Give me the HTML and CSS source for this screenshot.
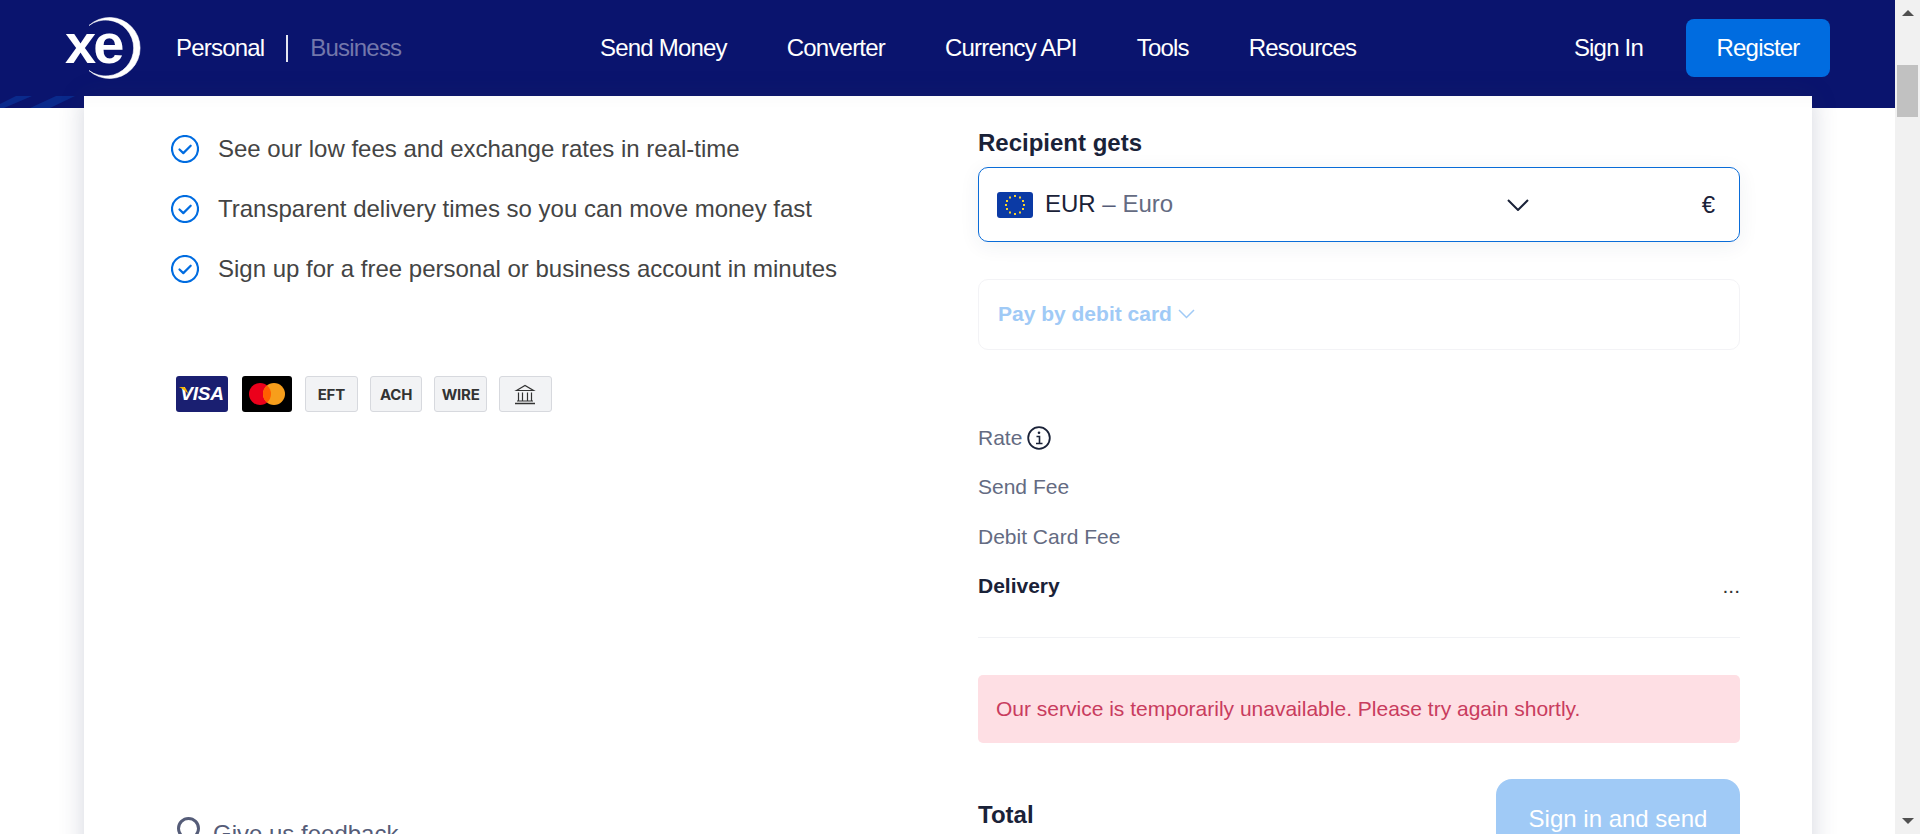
FILE: index.html
```html
<!DOCTYPE html>
<html lang="en">
<head>
<meta charset="utf-8">
<title>Xe Send Money</title>
<link rel="stylesheet" href="styles.css">
</head>
<body>
<div class="window">
  <div class="viewport">
    <div class="band">
      <header class="topbar">
        <a class="logo" aria-label="Xe">
          <svg width="78" height="62" viewBox="0 0 78 62">
            <path d="M24 8.500A30.500 30.500 0 1 1 24 53.500A28 28 0 1 0 24 8.500z" fill="#fff" stroke="#fff" stroke-width=".6"/>
            <text x="0" y="46" class="logo-text">xe</text>
          </svg>
        </a>
        <nav class="segment">
          <span class="seg-on">Personal</span>
          <span class="seg-line"></span>
          <span class="seg-off">Business</span>
        </nav>
        <nav class="mainnav">
          <span>Send Money</span>
          <span>Converter</span>
          <span>Currency API</span>
          <span>Tools</span>
          <span>Resources</span>
        </nav>
        <div class="auth">
          <span>Sign In</span>
          <span class="register">Register</span>
        </div>
      </header>
      <svg class="stripes" width="84" height="12" viewBox="0 0 84 12"><path d="M0 8L16 0h16L4 12H0zM30 12L56 0h19L50 12z" fill="#0a2a8c"/></svg>
    </div>
    <main class="card">
      <section class="left">
        <ul class="benefits">
          <li><svg class="tick" viewBox="0 0 28 28"><circle cx="14" cy="14" r="13" fill="none" stroke="#006ce0" stroke-width="2.200"/><path d="M8.500 14.500l3.800 3.600 7.400-7.400" fill="none" stroke="#006ce0" stroke-width="2.200" stroke-linecap="round" stroke-linejoin="round"/></svg>See our low fees and exchange rates in real-time</li>
          <li><svg class="tick" viewBox="0 0 28 28"><circle cx="14" cy="14" r="13" fill="none" stroke="#006ce0" stroke-width="2.200"/><path d="M8.500 14.500l3.800 3.600 7.400-7.400" fill="none" stroke="#006ce0" stroke-width="2.200" stroke-linecap="round" stroke-linejoin="round"/></svg>Transparent delivery times so you can move money fast</li>
          <li><svg class="tick" viewBox="0 0 28 28"><circle cx="14" cy="14" r="13" fill="none" stroke="#006ce0" stroke-width="2.200"/><path d="M8.500 14.500l3.800 3.600 7.400-7.400" fill="none" stroke="#006ce0" stroke-width="2.200" stroke-linecap="round" stroke-linejoin="round"/></svg>Sign up for a free personal or business account in minutes</li>
        </ul>
        <div class="badges">
          <span class="badge visa"><svg class="visa-swoosh" width="9" height="7" viewBox="0 0 9 7"><path d="M0 0h5c2 1 3 3 4 7C7 4 4 2 0 0z" fill="#f7b600"/></svg>VISA</span>
          <span class="badge mc"><svg width="36" height="22" viewBox="0 0 36 22"><circle cx="11" cy="11" r="11" fill="#eb001b"/><circle cx="25" cy="11" r="11" fill="#f79e1b"/><path d="M18 2.500A11 11 0 0 1 18 19.500A11 11 0 0 1 18 2.500z" fill="#ff5f00"/></svg></span>
          <span class="badge plain">EFT</span>
          <span class="badge plain">ACH</span>
          <span class="badge plain">WIRE</span>
          <span class="badge plain"><svg width="22" height="22" viewBox="0 0 22 22" fill="none" stroke="#333" stroke-width="1.200"><path d="M2.500 7.500L11 2.500l8.500 5z"/><path d="M4 7.500h14M4.500 9.500v8M8.500 9.500v8M13.500 9.500v8M17.500 9.500v8M3 18h16"/><path d="M1 20.500h20" stroke-width="1.500"/></svg></span>
        </div>
        <div class="feedback"><span class="feedback-ring"></span>Give us feedback</div>
      </section>
      <section class="right">
        <h2 class="label">Recipient gets</h2>
        <div class="select">
          <svg class="flag" width="36" height="26" viewBox="0 0 36 26">
            <rect width="36" height="26" rx="3" fill="#0b3aa5"/>
            <g fill="#f5cf2e">
              <rect x="17" y="3" width="2" height="2"/><rect x="22" y="4.500" width="2" height="2"/><rect x="25" y="8" width="2" height="2"/><rect x="26" y="12" width="2" height="2"/><rect x="25" y="16" width="2" height="2"/><rect x="22" y="19.500" width="2" height="2"/><rect x="17" y="21" width="2" height="2"/><rect x="12" y="19.500" width="2" height="2"/><rect x="9" y="16" width="2" height="2"/><rect x="8" y="12" width="2" height="2"/><rect x="9" y="8" width="2" height="2"/><rect x="12" y="4.500" width="2" height="2"/>
            </g>
          </svg>
          <span class="code">EUR <span class="dash">–</span> <span class="cname">Euro</span></span>
          <svg class="chev" width="22" height="12" viewBox="0 0 22 12"><path d="M1 1l10 10L21 1" fill="none" stroke="#1a2238" stroke-width="2"/></svg>
          <span class="sym">€</span>
        </div>
        <div class="pay">Pay by debit card <svg width="17" height="10" viewBox="0 0 17 10"><path d="M1 1l7.500 7.500L16 1" fill="none" stroke="#a0caf6" stroke-width="1.500"/></svg></div>
        <dl class="rows">
          <div class="row"><dt>Rate <svg class="info" width="24" height="24" viewBox="0 0 24 24"><circle cx="12" cy="12" r="10.800" fill="none" stroke="#1a2238" stroke-width="1.800"/><path d="M9.500 10.500h3v7M9 17.500h6.500" fill="none" stroke="#1a2238" stroke-width="1.600"/><circle cx="12" cy="6.800" r="1.300" fill="#1a2238"/></svg></dt></div>
          <div class="row"><dt>Send Fee</dt></div>
          <div class="row"><dt>Debit Card Fee</dt></div>
          <div class="row strong"><dt>Delivery</dt><dd>...</dd></div>
        </dl>
        <div class="alert">Our service is temporarily unavailable. Please try again shortly.</div>
        <div class="foot">
          <span class="total">Total</span>
          <span class="send">Sign in and send</span>
        </div>
      </section>
    </main>
  </div>
  <aside class="scrollbar">
    <span class="arrow-up"></span>
    <span class="thumb"></span>
    <span class="arrow-down"></span>
  </aside>
</div>
</body>
</html>
```
FILE: styles.css
```css
* { box-sizing: border-box; }
html, body { margin: 0; height: 100%; overflow: hidden; background: #fff; }
body { font-family: "Liberation Sans", Arial, sans-serif; color: #1a2238; }

.window { display: flex; height: 834px; overflow: hidden; }
.viewport { flex: 1; min-width: 0; overflow: hidden; }

.scrollbar { width: 25px; background: #f1f1f1; display: flex; flex-direction: column; align-items: center; padding: 10px 0 10px; }
.arrow-up { width: 0; height: 0; border-left: 6px solid transparent; border-right: 6px solid transparent; border-bottom: 6px solid #505050; }
.thumb { width: 21px; height: 52px; background: #c1c1c1; margin-top: 49px; }
.arrow-down { width: 0; height: 0; border-left: 6px solid transparent; border-right: 6px solid transparent; border-top: 6px solid #505050; margin-top: auto; }

.band { background: #0a146e; height: 108px; }
.topbar { height: 96px; display: flex; align-items: center; color: #fff; font-size: 24px; letter-spacing: -0.8px; }
.stripes { display: block; }
.logo { margin-left: 65px; width: 78px; height: 62px; display: block; margin-top: -1px; }
.logo-text { font: 700 56px "Liberation Sans", Arial, sans-serif; fill: #fff; letter-spacing: -3px; }
.segment { display: flex; align-items: center; margin-left: 33px; width: 424px; }
.seg-line { width: 2px; height: 27px; background: #e4e6f2; margin: 0 22px; }
.seg-off { color: #7377ab; }
.mainnav { display: flex; gap: 60px; }
.auth { margin-left: auto; margin-right: 65px; display: flex; align-items: center; gap: 43px; }
.register { background: #006ce0; height: 58px; width: 144px; display: flex; align-items: center; justify-content: center; border-radius: 8px; }

.card { position: relative; margin: -12px 83px 0 84px; height: 900px; background: #fff; box-shadow: 0 0 24px rgba(40, 50, 90, .2), inset 0 14px 14px -10px rgba(40, 50, 90, .025); display: flex; }
.left { width: 894px; padding: 0 0 0 87px; }
.benefits { list-style: none; margin: 39px 0 0; padding: 0; font-size: 24px; color: #444; display: flex; flex-direction: column; gap: 32px; }
.benefits li { display: flex; align-items: center; gap: 19px; height: 28px; white-space: nowrap; }
.tick { width: 28px; height: 28px; flex: none; }

.badges { display: flex; gap: 12px; margin: 93px 0 0 5px; height: 36px; }
.badge { width: 52.700px; height: 36px; border-radius: 3px; display: flex; align-items: center; justify-content: center; font: 700 15px Inter, "Liberation Sans", sans-serif; color: #333; letter-spacing: -.2px; }
.plain { background: #f2f3f5; border: 1px solid #d7d9de; }
.visa { background: #1a1f71; color: #fff; font: italic 700 19px "Liberation Sans", sans-serif; position: relative; width: 52px; margin-right: 2px; }
.visa-swoosh { position: absolute; left: 3px; top: 11px; }
.mc { background: #000; width: 50px; margin-right: 1px; }

.feedback { display: flex; align-items: center; margin: 408px 0 0 6px; font-size: 24px; color: #555c78; gap: 13px; line-height: 28px; }
.feedback-ring { width: 23px; height: 23px; border: 3px solid #555c78; border-radius: 50%; margin-top: -12px; }

.right { width: 762px; padding-top: 33px; }
.label { margin: 0; font-size: 24px; line-height: 28px; font-weight: 700; }
.select { margin-top: 10px; height: 75px; border: 1.5px solid #0a6cd8; border-radius: 10px; display: flex; align-items: center; padding: 0 24px 0 18px; box-shadow: 0 4px 20px rgba(40, 50, 90, .07); }
.flag { flex: none; }
.code { font-size: 24px; margin: 0 0 2px 12px; width: 462px; }
.dash { color: #555c78; }
.cname { color: #646b82; }
.chev { flex: none; }
.sym { margin-left: auto; font-size: 24px; }
.pay { margin-top: 37px; height: 71px; border: 1px solid #f3f3f6; border-radius: 10px; display: flex; align-items: center; gap: 6px; padding: 0 0 2px 19px; color: #a0caf6; font-size: 21px; font-weight: 700; }

.rows { margin: 76px 0 0; border-bottom: 1px solid #f1f2f5; padding-bottom: 13px; }
.row { display: flex; justify-content: space-between; height: 49.400px; font-size: 21px; color: #646b82; }
.row dt { display: flex; align-items: flex-start; gap: 5px; line-height: 24px; }
.row dd { margin: 0; color: #333; line-height: 24px; }
.strong { color: #1a2238; font-weight: 700; }
.strong dd { font-weight: 400; }

.alert { margin-top: 37px; padding-left: 18px; height: 68px; background: #fedfe4; color: #c93c5e; border-radius: 5px; display: flex; align-items: center; font-size: 21px; }

.foot { margin-top: 36px; display: flex; justify-content: space-between; }
.total { font-size: 24px; font-weight: 700; margin-top: 22px; }
.send { width: 244px; height: 80px; background: #a0caf6; color: #fff; border-radius: 16px; font-size: 24px; display: flex; align-items: center; justify-content: center; }
```
